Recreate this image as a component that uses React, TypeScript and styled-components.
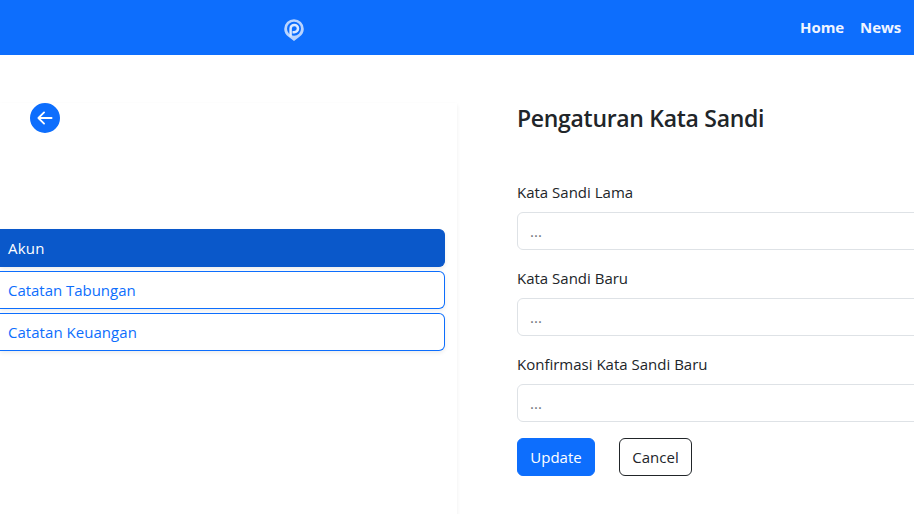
import React from "react";
import styled, { createGlobalStyle } from "styled-components";

const GlobalStyle = createGlobalStyle`
  *, *::before, *::after { box-sizing: border-box; }
  body {
    margin: 0;
    overflow: hidden;
    background: #fff;
    color: #212529;
    font: 400 15px/24px "Segoe UI", "Open Sans", "Noto Sans", sans-serif;
  }
`;

const Page = styled.div`
  width: 914px;
  height: 514px;
  overflow: hidden;
`;

const Navbar = styled.header`
  display: flex;
  align-items: center;
  height: 55px;
  padding: 0 13px 0 283px;
  background: #0d6efd;
`;

const LogoMark = styled.svg`
  display: block;
  width: 22px;
  height: 24px;
  margin-top: 4px;
`;

const NavLinks = styled.nav`
  display: flex;
  gap: 16px;
  margin: 0 0 2px auto;
`;

const NavLink = styled.a`
  color: #f0f5ff;
  font-weight: 700;
  font-size: 15px;
  letter-spacing: -0.1px;
`;

const Columns = styled.div`
  display: grid;
  grid-template-columns: 457px 1fr;
  column-gap: 60px;
  padding-top: 48px;
`;

const Sidebar = styled.aside`
  height: 440px;
  box-shadow: 0 2px 4px rgba(0, 0, 0, 0.075);
`;

const BackButton = styled.button`
  display: block;
  width: 30px;
  height: 30px;
  margin: 0 0 0 30px;
  padding: 0;
  border: 0;
  background: none;

  svg { display: block; }
`;

const Menu = styled.div`
  display: flex;
  flex-direction: column;
  gap: 4px;
  width: 445px;
  margin-top: 96px;
`;

const MenuItem = styled.a<{ $active?: boolean; $track: number }>`
  height: 38px;
  padding: 6px 8px;
  border: 1px solid ${(p) => (p.$active ? "#0a58ca" : "#0d6efd")};
  border-left: 0;
  border-radius: 0 6px 6px 0;
  background: ${(p) => (p.$active ? "#0a58ca" : "#fff")};
  color: ${(p) => (p.$active ? "#fff" : "#0d6efd")};
  box-shadow: 0 2px 4px rgba(0, 0, 0, 0.075);
  letter-spacing: ${(p) => p.$track}px;
`;

const Form = styled.form`
  width: 480px;
`;

const Title = styled.h1`
  margin: 1px 0 47px;
  font-size: 23px;
  line-height: 29px;
  font-weight: 600;
  letter-spacing: -0.3px;
`;

const Field = styled.div`
  margin-bottom: 16px;
`;

const Label = styled.label`
  display: block;
  margin-bottom: 8px;
`;

const Input = styled.input`
  display: block;
  width: 100%;
  height: 38px;
  padding: 6px 12px;
  border: 1px solid #dee2e6;
  border-radius: 6px;
  background: #fff;
  font: inherit;

  &::placeholder { color: #71767b; opacity: 1; }
`;

const Actions = styled.div`
  display: flex;
  gap: 24px;
`;

const Button = styled.button<{ $primary?: boolean; $width: number }>`
  width: ${(p) => p.$width}px;
  height: 38px;
  padding: 0;
  border: 1px solid ${(p) => (p.$primary ? "#0d6efd" : "#212529")};
  border-radius: 6px;
  background: ${(p) => (p.$primary ? "#0d6efd" : "#fff")};
  color: ${(p) => (p.$primary ? "#fff" : "#212529")};
  font: inherit;
`;

const Logo = () => (
  <LogoMark viewBox="0 0 22 24" fill="none">
    <path
      d="M11 1.200A9.800 9.800 0 0 0 1.200 11c0 3.300 1.700 6 4.300 7.800L11 23l5.500-4.200c2.600-1.800 4.300-4.500 4.300-7.800A9.800 9.800 0 0 0 11 1.200z"
      fill="#b9d4fe"
    />
    <circle cx="11" cy="10.800" r="7" fill="#0d6efd" />
    <path d="M7.600 18.500V10.600a3.700 3.700 0 1 1 3.700 3.700H9.500" stroke="#dbe9ff" strokeWidth="2.500" />
  </LogoMark>
);

const menu = [
  { text: "Akun", track: 0.2, active: true },
  { text: "Catatan Tabungan", track: -0.03 },
  { text: "Catatan Keuangan", track: 0.04 },
];

const fields = ["Kata Sandi Lama", "Kata Sandi Baru", "Konfirmasi Kata Sandi Baru"];

export default function App() {
  return (
    <Page>
      <GlobalStyle />
      <Navbar>
        <Logo />
        <NavLinks>
          <NavLink>Home</NavLink>
          <NavLink>News</NavLink>
        </NavLinks>
      </Navbar>
      <Columns>
        <Sidebar>
          <BackButton type="button" aria-label="Kembali">
            <svg width="30" height="30" viewBox="0 0 16 16" fill="#0d6efd">
              <path d="M8 0a8 8 0 1 0 0 16A8 8 0 0 0 8 0m3.500 7.500a.5.5 0 0 1 0 1H5.707l2.147 2.146a.5.5 0 0 1-.708.708l-3-3a.5.5 0 0 1 0-.708l3-3a.5.5 0 1 1 .708.708L5.707 7.500z" />
            </svg>
          </BackButton>
          <Menu>
            {menu.map((m) => (
              <MenuItem key={m.text} $active={m.active} $track={m.track}>
                {m.text}
              </MenuItem>
            ))}
          </Menu>
        </Sidebar>
        <Form>
          <Title>Pengaturan Kata Sandi</Title>
          {fields.map((text) => (
            <Field key={text}>
              <Label>{text}</Label>
              <Input type="text" placeholder="..." />
            </Field>
          ))}
          <Actions>
            <Button type="button" $primary $width={78}>Update</Button>
            <Button type="button" $width={73}>Cancel</Button>
          </Actions>
        </Form>
      </Columns>
    </Page>
  );
}
